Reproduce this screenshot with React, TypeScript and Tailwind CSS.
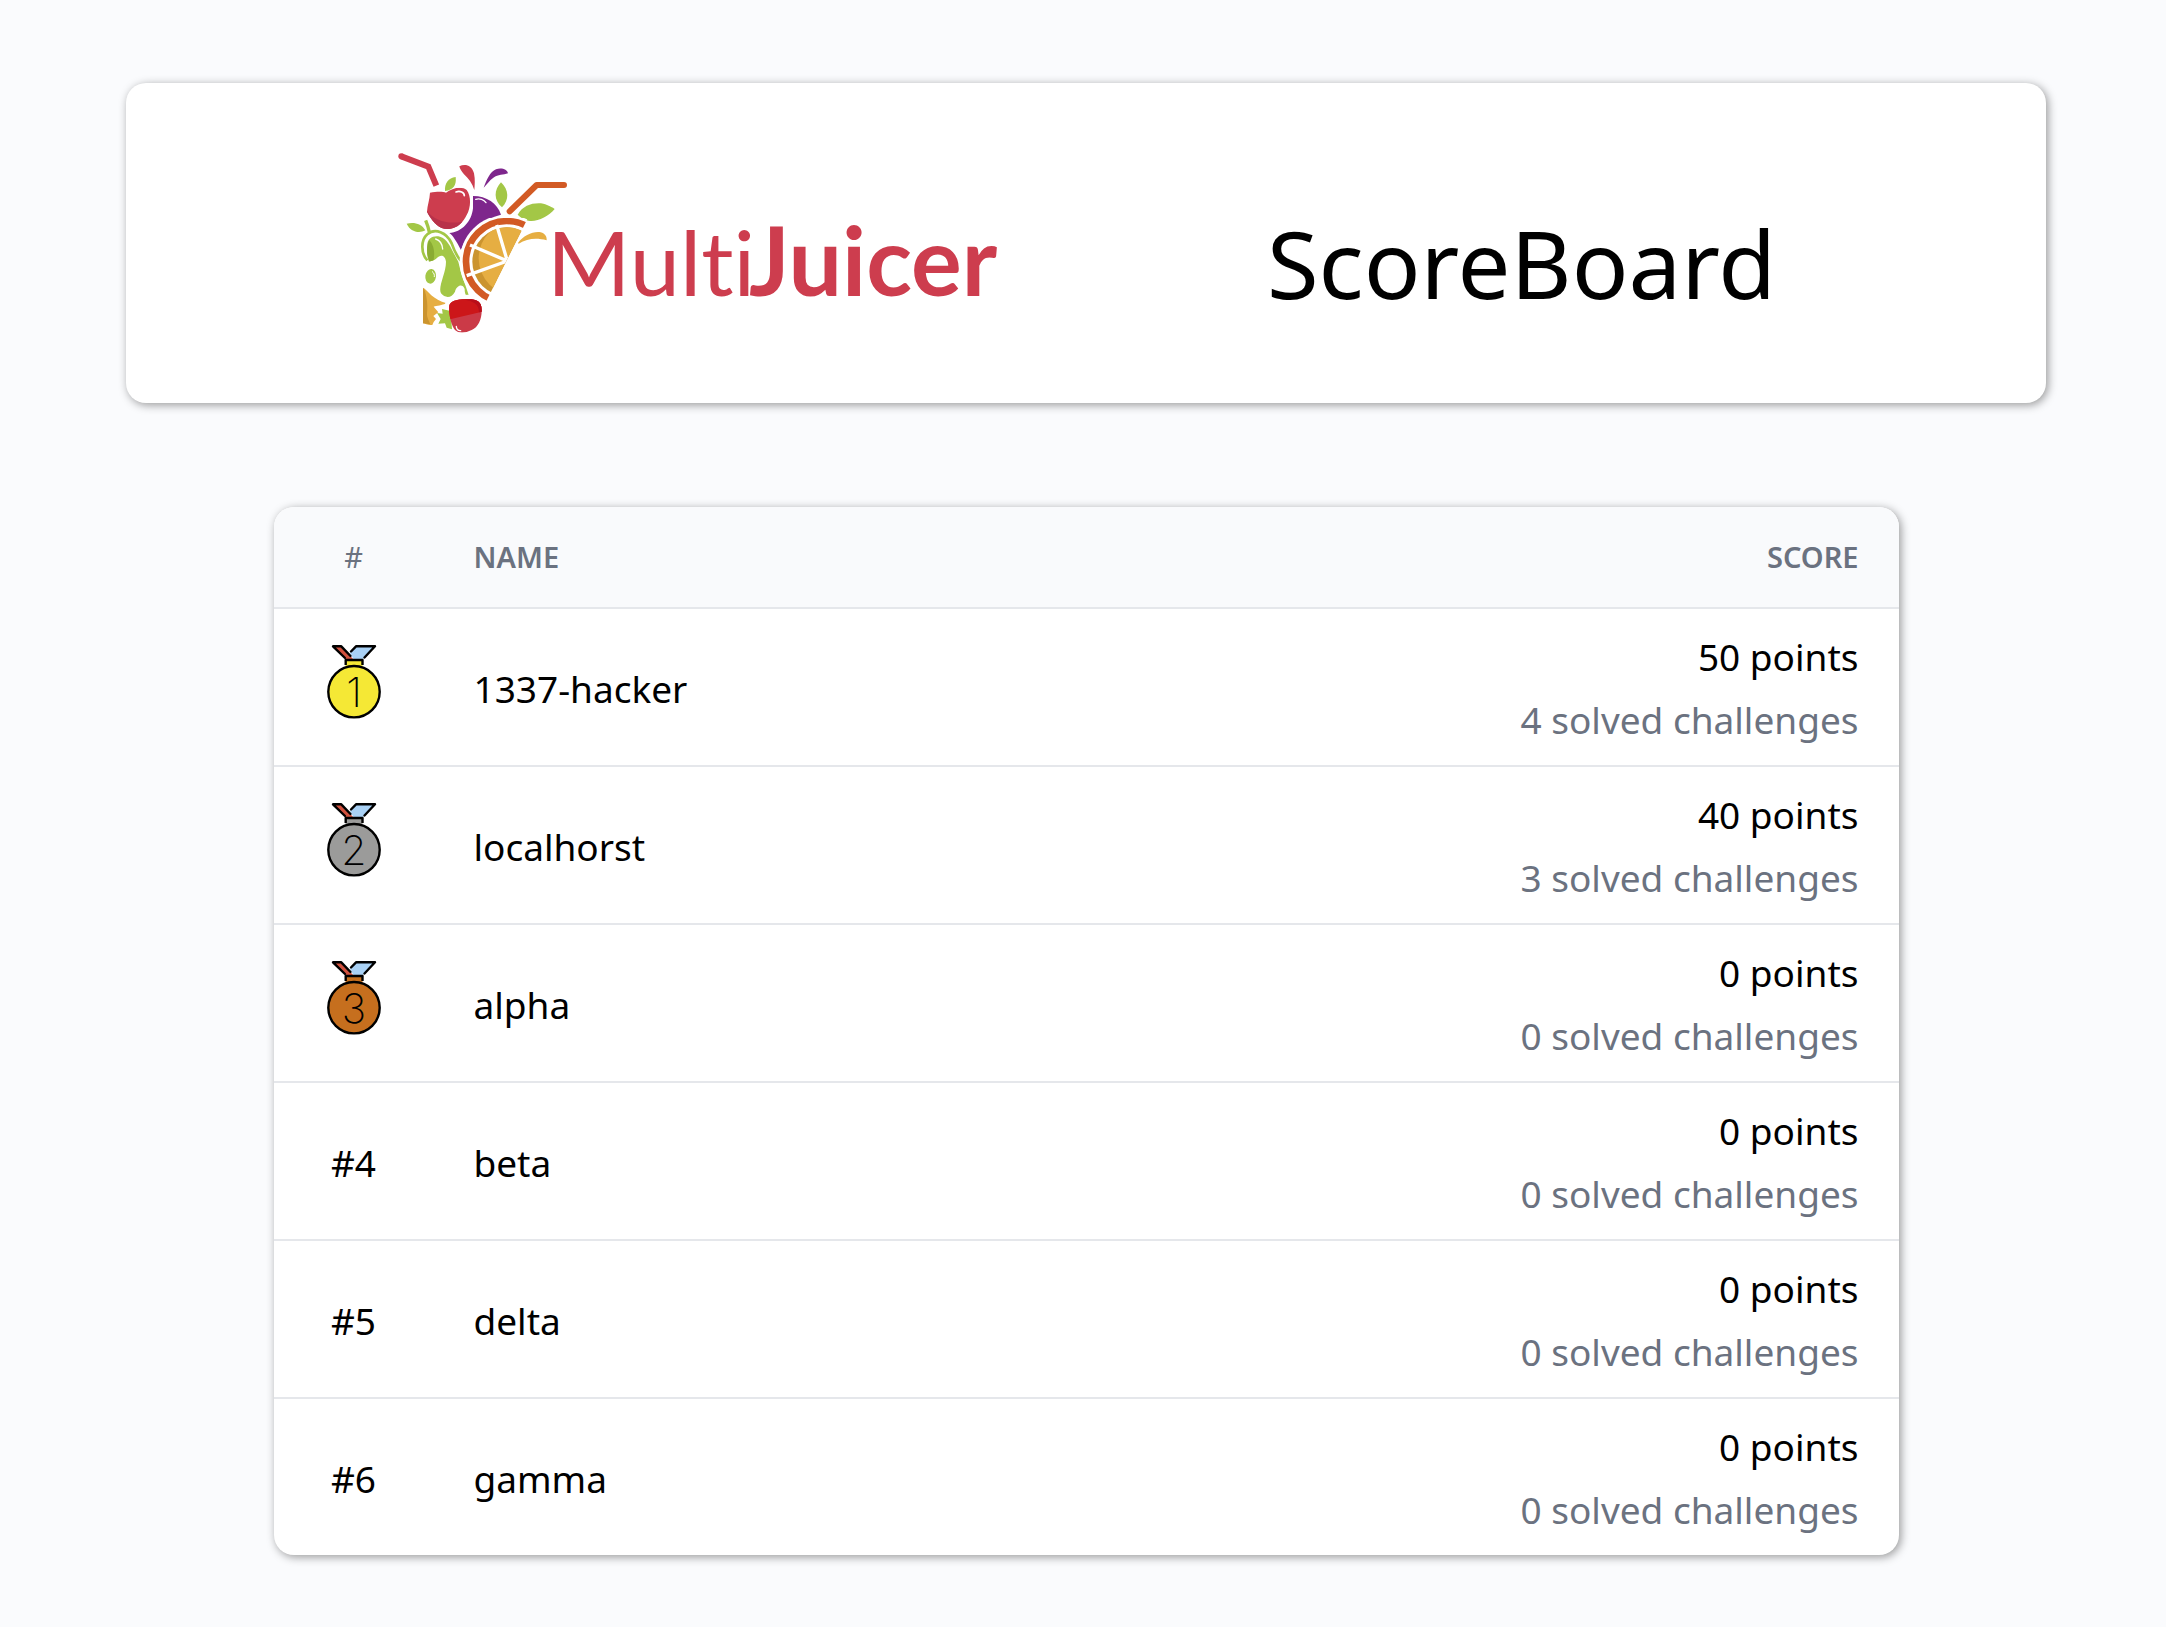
type Team = { name: string; points: number; solved: number };

const teams: Team[] = [
  { name: "1337-hacker", points: 50, solved: 4 },
  { name: "localhorst", points: 40, solved: 3 },
  { name: "alpha", points: 0, solved: 0 },
  { name: "beta", points: 0, solved: 0 },
  { name: "delta", points: 0, solved: 0 },
  { name: "gamma", points: 0, solved: 0 },
];

const medalColors = ["#f5e835", "#9b9b9a", "#c66f1e"];

function Medal({ place }: { place: number }) {
  const fill = medalColors[place - 1];
  return (
    <svg viewBox="0 0 60 80" className="mx-auto block h-20 w-[60px]" role="img" aria-label={`Place ${place}`}>
      <path d="M9 4h8l13 14h-7z" fill="#d0513e" />
      <path d="M32 4h19L38 18h-8l-4-7z" fill="#a9d1f5" />
      <path d="M21.500 18.500h17v7h-17z" fill={fill} />
      <g fill="none" stroke="#000" strokeWidth="2.400" strokeLinecap="round" strokeLinejoin="round">
        <path d="M21 16L9 4.300h8.300L26.500 14" />
        <path d="M27 9.500l5-5.200h19L40.500 15.500" />
        <path d="M21.700 23v-5h16.800v5" strokeLinecap="butt" />
        <circle cx="30" cy="49.700" r="25.700" fill={fill} />
      </g>
      <text x="30" y="65" textAnchor="middle" fontSize="41" className="font-[Inter] font-extralight">
        {place}
      </text>
    </svg>
  );
}

function Logo() {
  return (
    <svg viewBox="0 0 610 196" className="h-[196px] w-[610px] shrink-0" role="img" aria-label="MultiJuicer">
      <defs>
        <clipPath id="slice">
          <path d="M414 218L282 482H200V218z" />
        </clipPath>
        <clipPath id="flesh">
          <circle cx="350" cy="350" r="103" />
        </clipPath>
        <clipPath id="berry">
          <path d="M178 480c7-15 27-18 57-17 27 0 40 7 40 32 1 25-10 53-30 60-20 10-40 10-50 0-12-15-20-50-17-75z" />
        </clipPath>
        <clipPath id="apple">
          <path d="M120 143c20-4 40-4 48 0 17-13 47-21 62-8 15 20 12 55 0 75-10 20-25 35-38 38-12 5-27 5-37 1-20-9-37-34-44-49 1-20 8-35 9-57z" />
        </clipPath>
      </defs>
      <g transform="scale(0.33333)" fill="none">
        <path d="M34 34l81 31 24 57" stroke="#cd3d4e" strokeWidth="18" />
        <circle cx="34" cy="34" r="9" fill="#cd3d4e" />
        <path d="M208 64c17-8 37-4 44 21 4 20 2 35 1 50-6-20-18-35-31-47-8-10-12-16-14-24z" fill="#cd3d4e" />
        <path d="M281 128c9-23 19-48 37-55 17-6 34 1 36 12-14 5-29 3-44 13-12 9-20 20-29 30z" fill="#7e268c" />
        <g fill="#a3c746">
          <path d="M197 96c-22 2-34 19-32 42 25-3 35-18 32-42z" />
          <path d="M333 112c-21 23-23 53 3 75 22-22 21-52-3-75z" />
          <path d="M383 209c17-29 47-37 77-33 15 4 30 12 34 16-19 23-54 40-79 35-15-3-25-11-32-18z" />
          <path d="M50 236c20-6 45-1 56 20-21 12-46 2-56-20z" />
        </g>
        <path d="M359 199l81-79h82" stroke="#d25a24" strokeWidth="18" strokeLinecap="round" strokeLinejoin="round" />
        <path d="M249 153c41 0 73 22 84 56-53 13-98 46-120 106-13-25-25-45-35-51 37-2 67-34 71-74z" fill="#7e268c" />
        <path d="M257 163c12-4 25 1 31 10" stroke="#fff" strokeWidth="4" strokeLinecap="round" />
        <g clipPath="url(#apple)">
          <path d="M105 120h150v140H105z" fill="#cd3d4e" />
          <path d="M108 194c22 32 62 45 110 36v30H108z" fill="#b8324a" />
        </g>
        <path d="M198 141c12-5 25 1 25 11" stroke="#fff" strokeWidth="5" strokeLinecap="round" />

        <path d="M107 226c5 12 9 24 11 36" stroke="#a3c746" strokeWidth="10" />
        <path d="M112 346c-20-21-20-61 0-78 23-20 58-6 73 27 7 20 15 38 27 52" stroke="#a3c746" strokeWidth="8" />
        <path d="M112 300c0-20 18-30 38-25 25 7 35 40 55 75 7 35 20 65 31 100-4 6-12 2-12-18-6-18-24-12-29 8-10 20-30 20-42 5-10-20 15-60 15-95-3-22-18-22-28-10-10 10-18 8-23 10-7-15-7-35-5-50z" fill="#a3c746" />
        <path d="M118 349c-9-24-9-50 0-64 16 18 16 40 13 60-5 3-9 3-13 4z" fill="#8aab33" />
        <path d="M137 282c12 4 20 16 21 30" stroke="#fff" strokeWidth="4" strokeLinecap="round" />
        <ellipse cx="122" cy="394" rx="16" ry="22" fill="#a3c746" transform="rotate(8 122 394)" />
        <path d="M127 380c5 4 7 9 6 15" stroke="#fff" strokeWidth="3" strokeLinecap="round" />

        <g clipPath="url(#slice)">
          <circle cx="350" cy="350" r="141" fill="#fff" />
          <circle cx="350" cy="350" r="122" stroke="#d25a24" strokeWidth="20" />
          <circle cx="350" cy="350" r="103" fill="#cb942f" />
          <circle cx="378" cy="340" r="112" fill="#e6ae42" clipPath="url(#flesh)" />
          <path d="M352 348L320 240M352 348L240 300M352 348L230 392" stroke="#fff" strokeWidth="10" />
        </g>
        <path d="M384 294c16-22 46-36 68-32 14 4 19 14 18 24-30-8-58-6-84 10z" fill="#e6ae42" />

        <path d="M102 430c8 5 28 35 68 45-15 7-30 7-39 10l14 17-15 11 8 9-7 9-4 9c-12 2-22-5-28-5V430z" fill="#e6ae42" />
        <path d="M99 428c9 8 16 50 12 76-1 14 6 22 10 34l-22-3z" fill="#cb942f" />
        <path d="M141 504l17 2-2-14 26 6 4 55-16-5-5-13-20 1 7-14z" fill="#a3c746" />
        <path d="M168 480c8-22 30-27 67-27 34 0 48 12 48 42 0 30-12 60-36 70" stroke="#fff" strokeWidth="8" />
        <g clipPath="url(#berry)">
          <path d="M170 450h115v120H170z" fill="#cb3a47" />
          <path d="M170 450h115v48l-109 26z" fill="#cc1619" />
          <path d="M205 450h80v48l-18 4c0-30-28-38-62-39z" fill="#b80e1a" />
        </g>
        <path d="M199 544c0 8 5 13 13 13" stroke="#fff" strokeWidth="4" strokeLinecap="round" />
      </g>
      <g fill="#cd3d4e" className="font-[Lato] [font-variant-ligatures:none]">
        <text x="157" y="151" fontSize="90" className="font-normal">Multi</text>
        <text x="359" y="151" fontSize="95" className="font-bold">Juicer</text>
      </g>
    </svg>
  );
}

export default function App() {
  return (
    <main className="flex min-h-screen flex-col items-center gap-[104px] bg-[#fafbfd] pt-[83px] pr-6 pb-18 pl-[30px] font-['Noto_Sans',sans-serif] text-black">
      <header className="flex w-full max-w-[1920px] items-center justify-between rounded-[20px] bg-white py-[62px] pr-[270px] pl-66 shadow-[2px_2px_10px_rgba(0,0,0,0.4)]">
        <Logo />
        <h1 className="pt-10 text-[94px] leading-none">ScoreBoard</h1>
      </header>

      <section className="w-full max-w-[1625px] overflow-hidden rounded-[20px] bg-white shadow-[2px_2px_10px_rgba(0,0,0,0.4)]">
        <table className="w-full table-fixed text-[37px] leading-[63px]">
          <colgroup>
            <col className="w-40" />
            <col />
            <col />
          </colgroup>
          <thead className="bg-[#f9fafc] text-[29px] leading-[100px] text-[#6b7280]">
            <tr>
              <th scope="col" className="p-0 text-center font-normal">#</th>
              <th scope="col" className="px-10 py-0 text-left font-semibold">NAME</th>
              <th scope="col" className="px-10 py-0 text-right font-semibold">SCORE</th>
            </tr>
          </thead>
          <tbody>
            {teams.map((team, index) => (
              <tr key={team.name} className="border-t-2 border-gray-200">
                <td className={index < 3 ? "px-0 pt-0 pb-2.5 text-center" : "px-0 pt-0.5 pb-0 text-center"}>
                  {index < 3 ? <Medal place={index + 1} /> : `#${index + 1}`}
                </td>
                <td className="px-10 pt-0.5 pb-0">{team.name}</td>
                <td className="px-10 pt-4 pb-3.5 text-right">
                  <p>{team.points} points</p>
                  <p className="text-[#6b7280]">{team.solved} solved challenges</p>
                </td>
              </tr>
            ))}
          </tbody>
        </table>
      </section>
    </main>
  );
}
